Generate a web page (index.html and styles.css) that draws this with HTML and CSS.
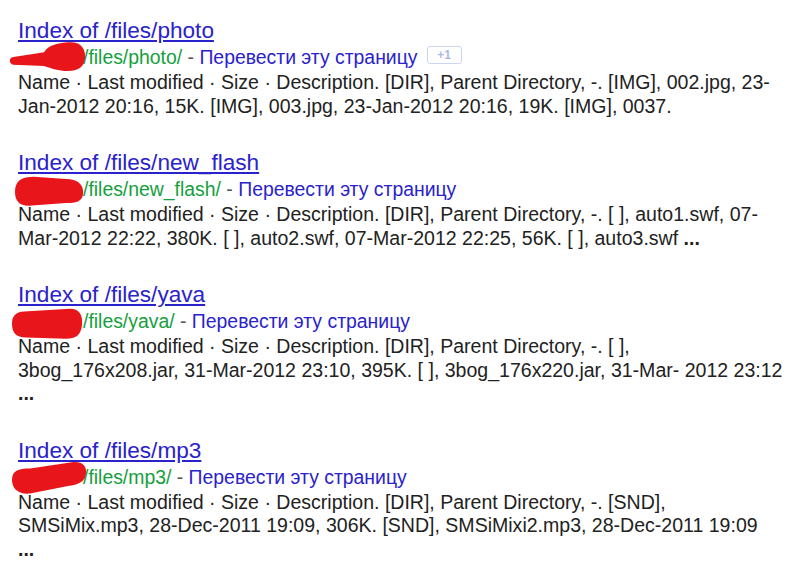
FILE: index.html
```html
<!DOCTYPE html>
<html lang="ru">
<head>
<meta charset="utf-8">
<title>Index of /files</title>
<link rel="stylesheet" href="styles.css">
</head>
<body>
<div class="results">

  <div class="result">
    <a class="title" href="#">Index of /files/photo</a>
    <div class="url"><span class="mask"><svg class="blot" viewBox="0 0 80 32" preserveAspectRatio="none" width="80" height="40"><path d="M2,13 L34,9 C38,3 50,1 62,1 C72,1 76,8 75,14 C74,21 68,24 58,24 C48,24 42,22 34,20 L3,19 C-1,18 -1,14 2,13 Z"/></svg></span><span class="cite">/files/photo/</span><span class="sep"> - </span><a class="tr" href="#">Перевести эту страницу</a><span class="plus">+1</span></div>
    <div class="snippet">Name · Last modified · Size · Description. [DIR], Parent Directory, -. [IMG], 002.jpg, 23-<br>Jan-2012 20:16, 15K. [IMG], 003.jpg, 23-Jan-2012 20:16, 19K. [IMG], 0037.</div>
  </div>

  <div class="result">
    <a class="title" href="#">Index of /files/new_flash</a>
    <div class="url"><span class="mask"><svg class="blot" viewBox="0 0 80 32" preserveAspectRatio="none" width="80" height="40"><path d="M5,15 C5,6 12,3 24,3 L60,5 C70,6 74,11 73,17 C72,23 66,24 56,24 L22,26 C10,27 5,23 5,15 Z"/></svg></span><span class="cite">/files/new_flash/</span><span class="sep"> - </span><a class="tr" href="#">Перевести эту страницу</a></div>
    <div class="snippet">Name · Last modified · Size · Description. [DIR], Parent Directory, -. [ ], auto1.swf, 07-<br>Mar-2012 22:22, 380K. [ ], auto2.swf, 07-Mar-2012 22:25, 56K. [ ], auto3.swf <b>...</b></div>
  </div>

  <div class="result">
    <a class="title" href="#">Index of /files/yava</a>
    <div class="url"><span class="mask"><svg class="blot" viewBox="0 0 80 32" preserveAspectRatio="none" width="80" height="40"><path d="M2,15 C2,7 8,5 18,5 L60,3 C70,3 73,9 72,16 C71,24 66,27 56,27 L16,26 C6,26 2,22 2,15 Z"/></svg></span><span class="cite">/files/yava/</span><span class="sep"> - </span><a class="tr" href="#">Перевести эту страницу</a></div>
    <div class="snippet">Name · Last modified · Size · Description. [DIR], Parent Directory, -. [ ],<br>3bog_176x208.jar, 31-Mar-2012 23:10, 395K. [ ], 3bog_176x220.jar, 31-Mar- 2012 23:12<br><b>...</b></div>
  </div>

  <div class="result">
    <a class="title" href="#">Index of /files/mp3</a>
    <div class="url"><span class="mask"><svg class="blot" viewBox="0 0 80 32" preserveAspectRatio="none" width="80" height="40"><path d="M2,15 C2,8 8,6 20,6 L62,1 C72,0 77,4 76,10 C75,17 68,19 58,20 L20,26 C8,27 2,22 2,15 Z"/></svg></span><span class="cite">/files/mp3/</span><span class="sep"> - </span><a class="tr" href="#">Перевести эту страницу</a></div>
    <div class="snippet">Name · Last modified · Size · Description. [DIR], Parent Directory, -. [SND],<br>SMSiMix.mp3, 28-Dec-2011 19:09, 306K. [SND], SMSiMixi2.mp3, 28-Dec-2011 19:09<br><b>...</b></div>
  </div>

</div>
</body>
</html>
```

FILE: styles.css
```css
html, body {
  margin: 0;
  padding: 0;
  background: #ffffff;
}

body {
  font-family: "Liberation Sans", Arial, sans-serif;
  color: #222222;
}

.results {
  display: flex;
  flex-direction: column;
  gap: 31px;
  padding: 17px 0 0 18px;
}

.result {
  display: flex;
  flex-direction: column;
  align-items: flex-start;
}

.title {
  font-size: 22.6px;
  line-height: 27px;
  color: #2a22cc;
  text-decoration: underline;
  text-underline-offset: 2px;
  white-space: nowrap;
}

.url {
  font-size: 19.4px;
  line-height: 27px;
  white-space: nowrap;
  display: flex;
  align-items: flex-start;
}

.mask {
  position: relative;
  display: inline-block;
  width: 65px;
  height: 27px;
}

.blot {
  position: absolute;
  left: -8px;
  top: -3px;
  fill: #e8161b;
  overflow: visible;
}

.cite {
  color: #14a03c;
}

.sep {
  color: #555555;
  white-space: pre;
}

.tr {
  color: #2a22cc;
  text-decoration: none;
}

.plus {
  display: inline-block;
  box-sizing: border-box;
  width: 35px;
  height: 18px;
  margin: 2px 0 0 9px;
  border: 1px solid #c9d5f2;
  border-radius: 3px;
  font-size: 12px;
  line-height: 16px;
  font-weight: bold;
  color: #a9b9e4;
  text-align: center;
}

.snippet {
  font-size: 19.55px;
  line-height: 23.5px;
  white-space: nowrap;
  color: #222222;
}

.snippet b {
  font-weight: bold;
}
```
